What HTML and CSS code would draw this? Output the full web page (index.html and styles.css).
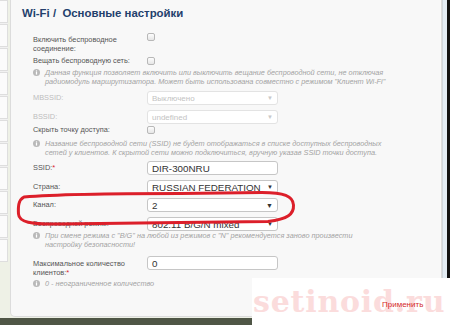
FILE: index.html
```html
<!DOCTYPE html>
<html lang="ru">
<head>
<meta charset="utf-8">
<title>Wi-Fi / Основные настройки</title>
<link rel="stylesheet" href="styles.css">
</head>
<body>
<div class="screen">
  <div class="main">
    <div class="sidebar">
      <div class="nav-item"></div><div class="nav-item"></div><div class="nav-item"></div>
      <div class="nav-item"></div><div class="nav-item"></div><div class="nav-item"></div>
      <div class="nav-item"></div><div class="nav-item"></div><div class="nav-item"></div>
      <div class="nav-item"></div><div class="nav-item"></div>
    </div>
    <div class="card">
      <h1 class="title">Wi-Fi /&nbsp; Основные настройки</h1>
      <div class="form">
        <div class="row row-top mt-15">
          <div class="label multi">Включить беспроводное<br>соединение:</div>
          <span class="cb cb-up"></span>
        </div>
        <div class="row row-cb mt-3">
          <div class="label">Вещать беспроводную сеть:</div>
          <span class="cb"></span>
        </div>
        <div class="info mt-2">
          <svg class="info-icon" viewBox="0 0 8 8"><circle cx="4" cy="4" r="4" fill="#b9b9b9"/><circle cx="4" cy="2.2" r="0.8" fill="#fff"/><rect x="3.3" y="3.4" width="1.4" height="3" fill="#fff"/></svg>
          <p class="info-text">Данная функция позволяет включить или выключить вещание беспроводной сети, не отключая<br>радиомодуль маршрутизатора. Может быть использована совместно с режимом "Клиент Wi-Fi"</p>
        </div>
        <div class="row mt-5">
          <div class="label disabled">MBSSID:</div>
          <div class="field field-disabled"><span>Выключено</span><span class="arrow">▼</span></div>
        </div>
        <div class="row mt-5">
          <div class="label disabled">BSSID:</div>
          <div class="field field-disabled"><span>undefined</span><span class="arrow">▼</span></div>
        </div>
        <div class="row row-cb mt-1">
          <div class="label">Скрыть точку доступа:</div>
          <span class="cb"></span>
        </div>
        <div class="info mt-4">
          <svg class="info-icon" viewBox="0 0 8 8"><circle cx="4" cy="4" r="4" fill="#b9b9b9"/><circle cx="4" cy="2.2" r="0.8" fill="#fff"/><rect x="3.3" y="3.4" width="1.4" height="3" fill="#fff"/></svg>
          <p class="info-text">Название беспроводной сети (SSID) не будет отображаться в списке доступных беспроводных<br>сетей у клиентов. К скрытой сети можно подключиться, вручную указав SSID точки доступа.</p>
        </div>
        <div class="row mt-4">
          <div class="label">SSID:<span class="req">*</span></div>
          <div class="field"><span>DIR-300NRU</span></div>
        </div>
        <div class="row mt-5">
          <div class="label">Страна:</div>
          <div class="field"><span>RUSSIAN FEDERATION</span><span class="arrow">▼</span></div>
        </div>
        <div class="row mt-4">
          <div class="label">Канал:</div>
          <div class="field"><span>2</span><span class="arrow big">▼</span></div>
        </div>
        <div class="row mt-5">
          <div class="label">Беспроводной режим:</div>
          <div class="field"><span>802.11 B/G/N mixed</span><span class="arrow">▼</span></div>
        </div>
        <div class="info">
          <svg class="info-icon" viewBox="0 0 8 8"><circle cx="4" cy="4" r="4" fill="#b9b9b9"/><circle cx="4" cy="2.2" r="0.8" fill="#fff"/><rect x="3.3" y="3.4" width="1.4" height="3" fill="#fff"/></svg>
          <p class="info-text">При смене режима с "B/G" на любой из режимов с "N" рекомендуется заново произвести<br>настройку безопасности!</p>
        </div>
        <div class="row row-top mt-7">
          <div class="label multi label-down">Максимальное количество<br>клиентов:<span class="req">*</span></div>
          <div class="field"><span>0</span></div>
        </div>
        <div class="info mt-2">
          <svg class="info-icon" viewBox="0 0 8 8"><circle cx="4" cy="4" r="4" fill="#b9b9b9"/><circle cx="4" cy="2.2" r="0.8" fill="#fff"/><rect x="3.3" y="3.4" width="1.4" height="3" fill="#fff"/></svg>
          <p class="info-text">0 - неограниченное количество</p>
        </div>
      </div>
    </div>
    <div class="edge-blue"></div>
    <div class="edge-black"></div>
  </div>
  <div class="bottom-strip"></div>

  <div class="apply-box">
    <span class="watermark">setinoid.ru</span>
    <span class="apply">Применить</span>
  </div>

  <svg class="annotation" viewBox="0 0 450 325" width="450" height="325">
    <path d="M 24 197 C 60 194, 120 193.5, 180 193.5 L 262 192.5 C 284 192.5, 293 196, 293.5 205 C 294 214, 288 219, 268 221.5 L 180 222.5 L 60 224 C 30 224.5, 19 222, 18.5 214 C 18 206, 18.5 200, 24 197 Z" fill="none" stroke="#dc1f2a" stroke-width="3" stroke-linejoin="round"/>
  </svg>
</div>
</body>
</html>
```

FILE: styles.css
```css
* { box-sizing: border-box; }

html, body {
  margin: 0;
  padding: 0;
}

body {
  width: 450px;
  height: 325px;
  overflow: hidden;
  background: #eef1e6;
  font-family: "Liberation Sans", Arial, sans-serif;
}

.screen {
  position: relative;
  width: 450px;
  height: 325px;
}

.main {
  display: flex;
  height: 318px;
  background: #eef1e6;
}

.sidebar {
  width: 8px;
  height: 262px;
  margin-right: 2px;
  display: flex;
  flex-direction: column;
  gap: 1px;
  background: #f1f1f1;
}

.nav-item {
  height: 23px;
  background: #fbfbfb;
  border: 1px solid #dedede;
  border-left: none;
}

.card {
  width: 432px;
  height: 317px;
  background: #f8f8f8;
  border: 1px solid #dcdcdc;
  border-top: none;
  border-radius: 0 0 5px 5px;
}

.title {
  margin: 6px 0 0 11px;
  font-size: 11.4px;
  line-height: 14px;
  font-weight: bold;
  color: #233f6c;
}

.form {
  padding-left: 22px;
  display: flex;
  flex-direction: column;
}

.row {
  display: flex;
  align-items: center;
  height: 14px;
}

.row-cb { height: 10px; }

.row-top {
  align-items: flex-start;
  height: auto;
}

.label {
  width: 114px;
  flex: none;
  font-size: 7.4px;
  line-height: 10px;
  color: #555;
  white-space: nowrap;
}

.label.multi { line-height: 9px; }
.label-down { margin-top: 3px; }

.label.disabled { color: #bdbdbd; }

.req { color: #d9232b; }

.cb {
  width: 8px;
  height: 8px;
  border: 1px solid #b8b8b8;
  border-radius: 2px;
  background: linear-gradient(#fdfdfd, #e6e6e6);
}

.cb-up { margin-top: -2px; }

.field {
  width: 131px;
  height: 14px;
  border: 1px solid #c6c6c6;
  border-radius: 3px;
  background: #fff;
  display: flex;
  align-items: center;
  justify-content: space-between;
  padding: 0 4px 0 4px;
  font-size: 9.8px;
  color: #333;
}

.field-disabled {
  border-color: #e3e3e3;
  color: #c3c3c3;
  font-size: 8px;
}

.arrow {
  font-size: 6px;
  color: #333;
}

.arrow.big { font-size: 7px; }

.field-disabled .arrow { color: #c8c8c8; }

.info {
  display: flex;
  align-items: flex-start;
  gap: 5px;
}

.info-icon {
  width: 7px;
  height: 7px;
  flex: none;
  margin-top: 1px;
}

.info-text {
  margin: 0;
  font-size: 7.3px;
  line-height: 9px;
  font-style: italic;
  color: #a3a3a3;
  white-space: nowrap;
}

.mt-1 { margin-top: 1px; }
.mt-2 { margin-top: 2px; }
.mt-3 { margin-top: 3px; }
.mt-4 { margin-top: 4px; }
.mt-5 { margin-top: 5px; }
.mt-7 { margin-top: 7px; }
.mt-15 { margin-top: 15px; }

.edge-blue {
  width: 5px;
  background: #e3ecf3;
  border-left: 1px solid #cfd6dc;
}

.edge-black {
  width: 3px;
  background: #111;
}

.bottom-strip {
  height: 7px;
  background: #4f5646;
}

.apply-box {
  position: absolute;
  left: 252px;
  top: 278px;
  right: 0;
  bottom: 0;
  background: #fff;
  overflow: hidden;
}

.watermark {
  position: absolute;
  left: 1px;
  top: 6px;
  font-family: "DejaVu Serif", "Liberation Serif", serif;
  font-weight: bold;
  font-size: 30px;
  letter-spacing: 0.8px;
  color: #fbdcdc;
  white-space: nowrap;
}

.apply {
  position: absolute;
  left: 130px;
  top: 22px;
  font-size: 8px;
  color: #d42a2a;
}

.annotation {
  position: absolute;
  left: 0;
  top: 0;
  pointer-events: none;
}
```
